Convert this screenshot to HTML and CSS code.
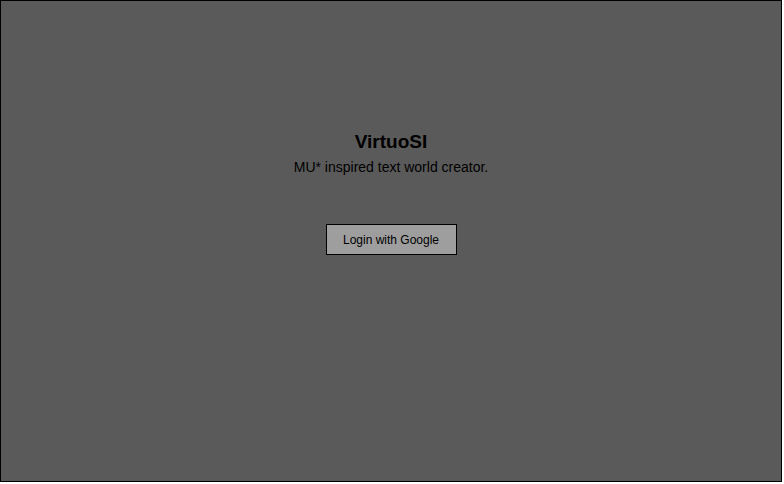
FILE: index.html
```html
<!DOCTYPE html>
<html>
<head>
<meta charset="utf-8">
<link rel="stylesheet" href="styles.css">
</head>
<body>
<div class="frame">
  <div class="intro">
    <h1 class="title">VirtuoSI</h1>
    <p class="tagline">MU* inspired text world creator.</p>
    <button class="login">Login with Google</button>
  </div>
</div>
</body>
</html>
```
FILE: styles.css
```css
html, body {
  margin: 0;
  padding: 0;
  background: #ffffff;
}
.frame {
  box-sizing: border-box;
  width: 782px;
  height: 482px;
  border: 1px solid #000;
  background: #5a5a5a;
  font-family: "Liberation Sans", Arial, sans-serif;
  color: #000;
  display: flex;
  justify-content: center;
  padding-top: 130px;
}
.intro {
  display: flex;
  flex-direction: column;
  align-items: center;
}
.title {
  margin: 0;
  font-size: 19px;
  font-weight: bold;
  line-height: 22px;
}
.tagline {
  margin: 5px 0 0;
  font-size: 14px;
  line-height: 18px;
}
.login {
  margin-top: 48px;
  width: 131px;
  height: 31px;
  background: #9e9e9e;
  border: 1px solid #000;
  font-family: "Liberation Sans", Arial, sans-serif;
  font-size: 12px;
  color: #000;
  padding: 0;
}
```
